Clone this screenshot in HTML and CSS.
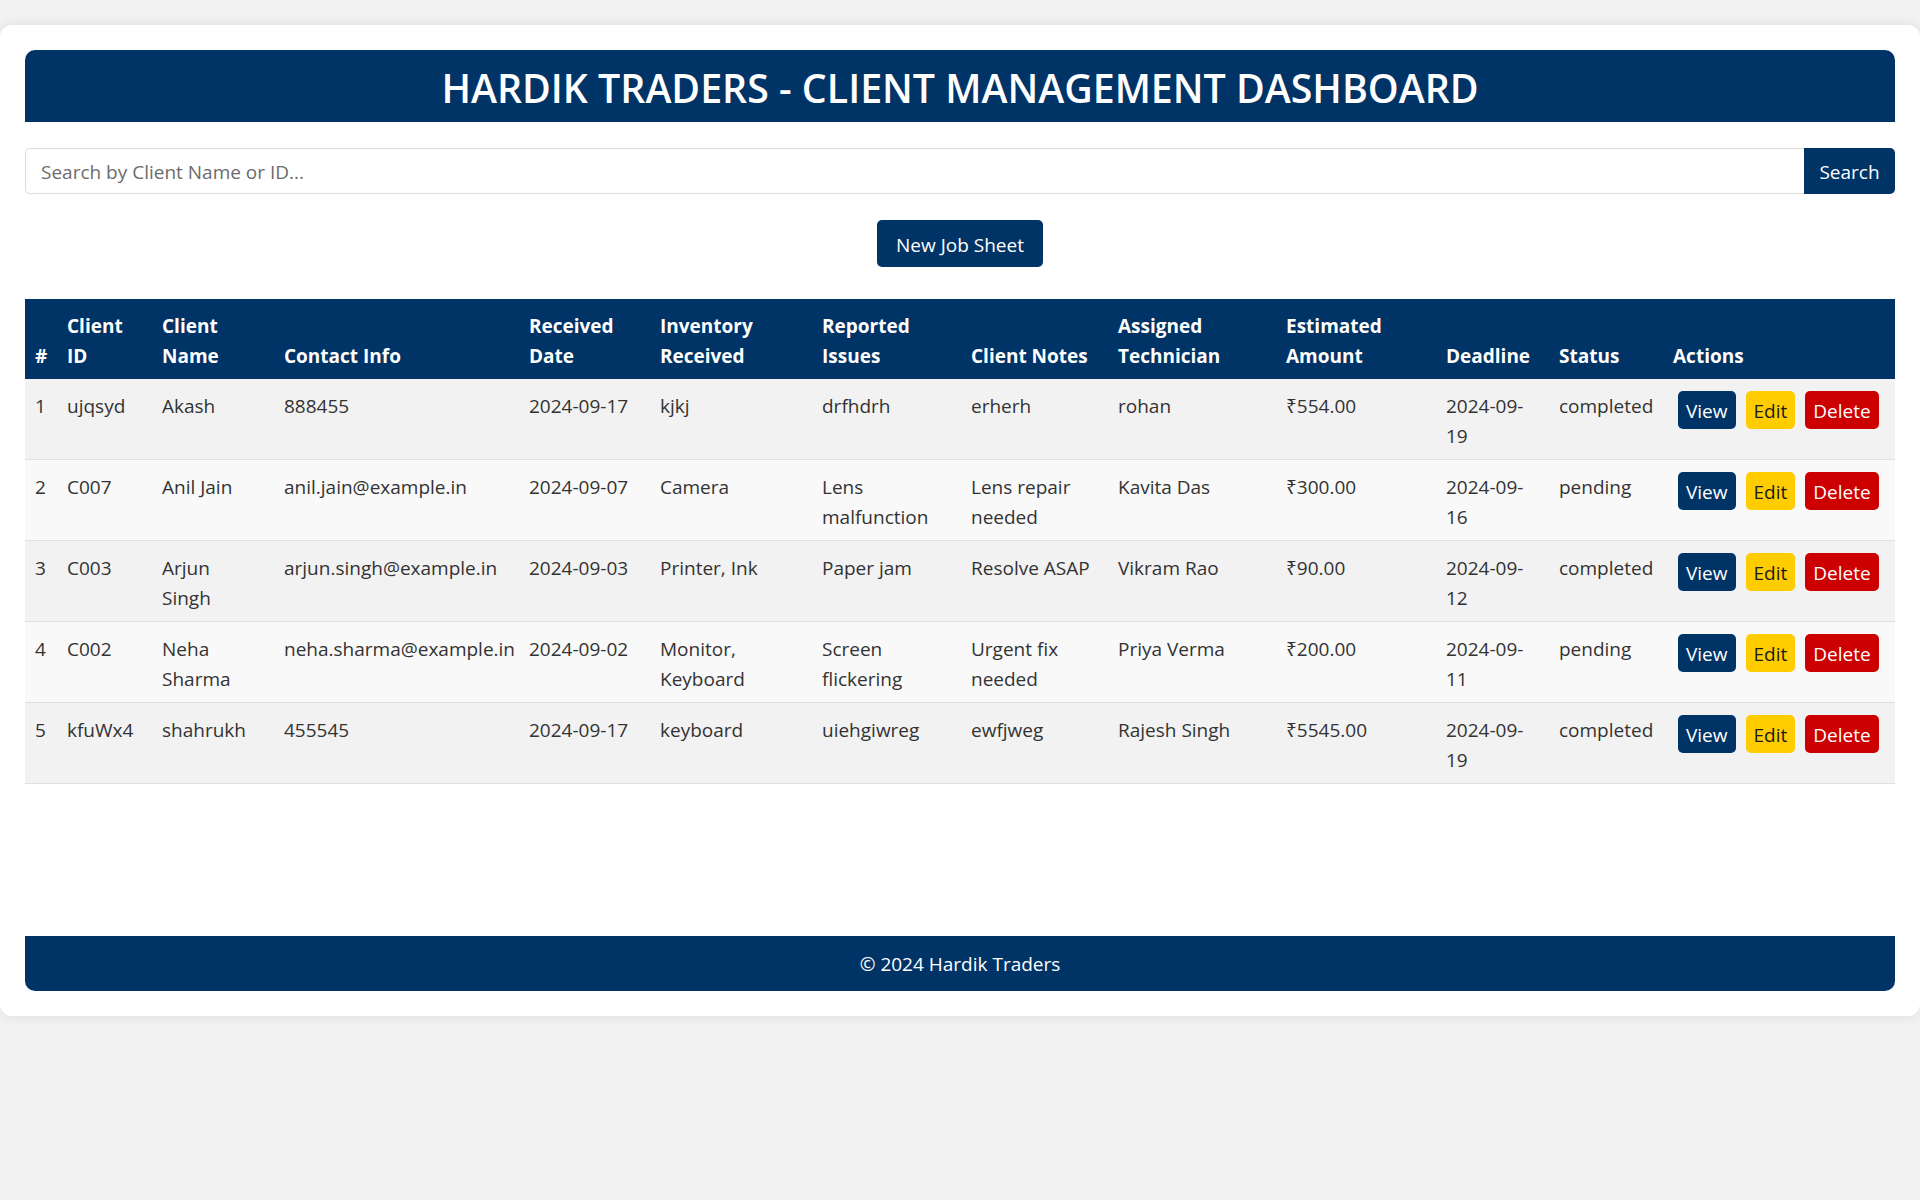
FILE: index.html
```html
<!DOCTYPE html>
<html lang="en">
<head>
<meta charset="utf-8">
<title>Hardik Traders - Client Management Dashboard</title>
<link rel="stylesheet" href="styles.css">
</head>
<body>
<div class="container">
  <header class="page-header">
    <h1>HARDIK TRADERS - CLIENT MANAGEMENT DASHBOARD</h1>
  </header>

  <form class="search-bar">
    <input class="search-input" type="text" placeholder="Search by Client Name or ID...">
    <button class="search-btn" type="button">Search</button>
  </form>

  <div class="new-job-row">
    <button class="btn btn-navy new-job" type="button">New Job Sheet</button>
  </div>

  <table class="clients">
    <colgroup>
      <col class="c-num"><col class="c-id"><col class="c-name"><col class="c-contact">
      <col class="c-date"><col class="c-inv"><col class="c-issue"><col class="c-notes">
      <col class="c-tech"><col class="c-amount"><col class="c-deadline"><col class="c-status">
      <col class="c-actions">
    </colgroup>
    <thead>
      <tr>
        <th>#</th><th>Client ID</th><th>Client Name</th><th>Contact Info</th>
        <th>Received Date</th><th>Inventory Received</th><th>Reported Issues</th>
        <th>Client Notes</th><th>Assigned Technician</th><th>Estimated Amount</th>
        <th>Deadline</th><th>Status</th><th>Actions</th>
      </tr>
    </thead>
    <tbody>
      <tr>
        <td>1</td><td>ujqsyd</td><td>Akash</td><td>888455</td><td>2024-09-17</td><td>kjkj</td>
        <td>drfhdrh</td><td>erherh</td><td>rohan</td><td>₹554.00</td><td>2024-09-19</td><td>completed</td>
        <td><div class="row-actions"><button class="btn btn-navy">View</button><button class="btn btn-yellow">Edit</button><button class="btn btn-red">Delete</button></div></td>
      </tr>
      <tr>
        <td>2</td><td>C007</td><td>Anil Jain</td><td>anil.jain@example.in</td><td>2024-09-07</td><td>Camera</td>
        <td>Lens malfunction</td><td>Lens repair needed</td><td>Kavita Das</td><td>₹300.00</td><td>2024-09-16</td><td>pending</td>
        <td><div class="row-actions"><button class="btn btn-navy">View</button><button class="btn btn-yellow">Edit</button><button class="btn btn-red">Delete</button></div></td>
      </tr>
      <tr>
        <td>3</td><td>C003</td><td>Arjun Singh</td><td>arjun.singh@example.in</td><td>2024-09-03</td><td>Printer, Ink</td>
        <td>Paper jam</td><td>Resolve ASAP</td><td>Vikram Rao</td><td>₹90.00</td><td>2024-09-12</td><td>completed</td>
        <td><div class="row-actions"><button class="btn btn-navy">View</button><button class="btn btn-yellow">Edit</button><button class="btn btn-red">Delete</button></div></td>
      </tr>
      <tr>
        <td>4</td><td>C002</td><td>Neha Sharma</td><td>neha.sharma@example.in</td><td>2024-09-02</td><td>Monitor, Keyboard</td>
        <td>Screen flickering</td><td>Urgent fix needed</td><td>Priya Verma</td><td>₹200.00</td><td>2024-09-11</td><td>pending</td>
        <td><div class="row-actions"><button class="btn btn-navy">View</button><button class="btn btn-yellow">Edit</button><button class="btn btn-red">Delete</button></div></td>
      </tr>
      <tr>
        <td>5</td><td>kfuWx4</td><td>shahrukh</td><td>455545</td><td>2024-09-17</td><td>keyboard</td>
        <td>uiehgiwreg</td><td>ewfjweg</td><td>Rajesh Singh</td><td>₹5545.00</td><td>2024-09-19</td><td>completed</td>
        <td><div class="row-actions"><button class="btn btn-navy">View</button><button class="btn btn-yellow">Edit</button><button class="btn btn-red">Delete</button></div></td>
      </tr>
    </tbody>
  </table>

  <footer class="page-footer">© 2024 Hardik Traders</footer>
</div>
</body>
</html>
```

FILE: styles.css
```css
* {
  box-sizing: border-box;
}

html, body {
  margin: 0;
  padding: 0;
}

body {
  background: #f2f2f2;
  font-family: "Open Sans", "Noto Sans", "Liberation Sans", sans-serif;
  font-size: 19px;
  line-height: 30px;
  color: #333333;
  min-height: 1200px;
}

.container {
  margin-top: 25px;
  width: 1920px;
  padding: 25px;
  background: #ffffff;
  border-radius: 12px;
  box-shadow: 0 0 14px rgba(0, 0, 0, 0.09);
}

.page-header {
  background: #003366;
  border-radius: 10px 10px 0 0;
  padding: 14px 0 10px;
  text-align: center;
}

.page-header h1 {
  margin: 0;
  color: #ffffff;
  font-size: 39.3px;
  font-weight: 600;
  line-height: 48px;
}

.search-bar {
  display: flex;
  margin: 26px 0 0;
  height: 46px;
}

.search-input {
  flex: 1;
  height: 46px;
  border: 1px solid #dcdcdc;
  border-right: none;
  border-radius: 5px 0 0 5px;
  padding: 2px 15px 0;
  font-family: inherit;
  font-size: 19px;
  color: #333333;
  outline: none;
}

.search-input::placeholder {
  color: #6c6c6c;
}

.search-btn {
  width: 91px;
  height: 46px;
  border: none;
  border-radius: 0 5px 5px 0;
  background: #003366;
  color: #ffffff;
  font-family: inherit;
  font-size: 19px;
  padding: 2px 0 0;
}

.new-job-row {
  display: flex;
  justify-content: center;
  margin-top: 26px;
}

.btn {
  border: none;
  border-radius: 5px;
  font-family: inherit;
  font-size: 19px;
  line-height: 30px;
  padding: 5px 8px 3px;
  white-space: nowrap;
  cursor: pointer;
}

.btn-navy {
  background: #003366;
  color: #ffffff;
}

.btn-yellow {
  background: #ffcc00;
  color: #1a1a1a;
}

.btn-red {
  background: #cc0000;
  color: #ffffff;
}

.new-job {
  padding: 10px 19px 7px;
}

.clients {
  width: 100%;
  margin-top: 32px;
  border-collapse: collapse;
  table-layout: fixed;
}

.c-num { width: 32px; }
.c-id { width: 95px; }
.c-name { width: 122px; }
.c-contact { width: 245px; }
.c-date { width: 131px; }
.c-inv { width: 162px; }
.c-issue { width: 149px; }
.c-notes { width: 147px; }
.c-tech { width: 168px; }
.c-amount { width: 160px; }
.c-deadline { width: 113px; }
.c-status { width: 114px; }
.c-actions { width: 232px; }

.clients th {
  background: #003366;
  color: #ffffff;
  font-weight: 700;
  text-align: left;
  vertical-align: bottom;
  padding: 12px 10px 8px;
}

.clients td {
  padding: 12px 10px 8px;
  vertical-align: top;
  text-align: left;
  border-bottom: 1px solid #dedede;
}

.clients td:nth-child(3) {
  padding-right: 16px;
}

.clients tbody tr:nth-child(odd) td {
  background: #f2f2f2;
}

.clients tbody tr:nth-child(even) td {
  background: #f9f9f9;
}

.row-actions {
  display: flex;
  margin-top: 0;
}

.row-actions .btn {
  margin: 0 5px;
}

.page-footer {
  margin-top: 152px;
  background: #003366;
  color: #ffffff;
  text-align: center;
  padding: 13px 0 12px;
  border-radius: 0 0 10px 10px;
}
```
